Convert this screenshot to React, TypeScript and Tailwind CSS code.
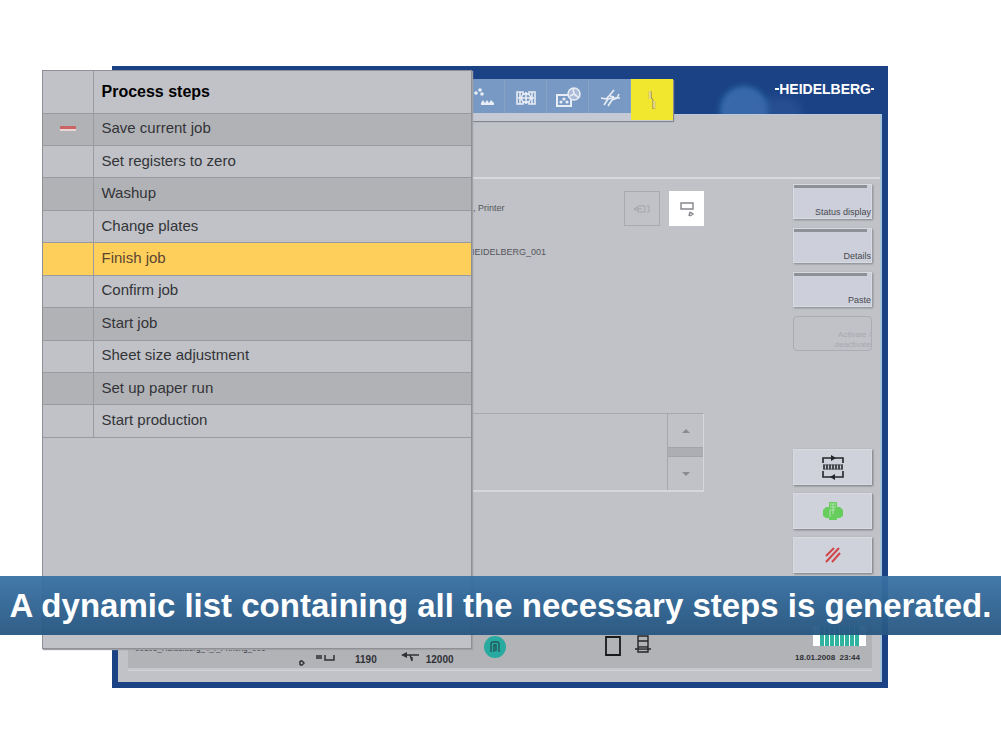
import type { ReactNode } from "react";

const steps = [
  "Save current job",
  "Set registers to zero",
  "Washup",
  "Change plates",
  "Finish job",
  "Confirm job",
  "Start job",
  "Sheet size adjustment",
  "Set up paper run",
  "Start production",
];

function rowColour(index: number) {
  if (steps[index] === "Finish job") return "bg-[#ffcf5c] text-[#5b4632]";
  return index % 2 === 0 ? "bg-[#b1b2b6] text-[#333438]" : "bg-[#c0c2c7] text-[#333438]";
}

function StepsPanel() {
  return (
    <section className="absolute left-[42px] top-[70px] z-10 h-[579px] w-[430px] border border-[#8e9095] bg-[#c0c2c7] shadow-[1px_1px_1px_#a0a1a5]">
      <table className="h-[367px] w-full border-collapse text-left">
        <thead>
          <tr className="h-[42px] border-b border-[#999ba0] text-[16px] text-black">
            <th className="w-[50px] border-r border-[#999ba0]" aria-label="State" />
            <th className="px-2 font-bold">Process steps</th>
          </tr>
        </thead>
        <tbody className="text-[15px]">
          {steps.map((step, i) => (
            <tr key={step} className={`border-b border-[#999ba0] ${rowColour(i)}`}>
              <td className="border-r border-[#999ba0] pb-0.5">
                {i === 0 && <div className="mx-auto h-[5px] w-4 border-b-2 border-[#eed5d5] bg-[#cc6464]" />}
              </td>
              <td className="px-2 pb-0.5 leading-4">{step}</td>
            </tr>
          ))}
        </tbody>
      </table>
    </section>
  );
}

function ToolButton({ label, children }: { label: string; children: ReactNode }) {
  return (
    <button aria-label={label} className="flex h-[34px] w-[42px] items-center justify-center border-r border-[#86a3c6] bg-[#7899c3] pt-1">
      <svg viewBox="0 0 26 22" className="h-[22px] w-[26px]" fill="none" stroke="#e8edf5" strokeWidth="1.6">
        {children}
      </svg>
    </button>
  );
}

function Toolbar() {
  return (
    <div className="ml-auto flex h-[42px] items-start bg-[#c5c9d3] shadow-[1px_1px_1px_#85878c]">
      <ToolButton label="Powder">
        <g fill="#e8edf5" stroke="none">
          <circle cx="5" cy="6" r="1.8" /><circle cx="9" cy="3" r="1.8" /><circle cx="11" cy="7" r="1.8" />
          <path d="M10 18v-2l2-3 2 3 2-3 2 3 2-3 3 3v2z" />
        </g>
      </ToolButton>
      <ToolButton label="Register">
        <path d="M4 5h6v2h6V5h6v12h-6v-2h-6v2H4zM7 5v12M19 5v12M13 5v12M5 11h16" />
        <circle cx="13" cy="11" r="4.5" />
      </ToolButton>
      <ToolButton label="Ink preview">
        <path d="M2 8h14v11H2z" strokeWidth="2" />
        <circle cx="19" cy="7" r="6" fill="#a9bbd6" />
        <path d="M18 1l1 6 4 3M15 9l4-2" />
        <g fill="#e8edf5" stroke="none"><circle cx="6" cy="15" r="1.6" /><circle cx="9" cy="12" r="1.6" /><circle cx="12" cy="15" r="1.6" /></g>
      </ToolButton>
      <ToolButton label="Washup">
        <path d="M4 11l5 1 3-3 5-6M7 18l4-6 4-1h8M11 19l4-6 5-2 2-4M13 9l4 1" />
      </ToolButton>
      <button aria-label="Process" className="flex h-[41px] w-[42px] items-center justify-center bg-[#f0e72e]">
        <svg viewBox="0 0 20 26" className="h-[26px] w-5" fill="none">
          <path d="M8 4v8M12 14v8" stroke="#d0bd55" strokeWidth="3" />
          <path d="M9 4v6l2 3v9" stroke="#918458" />
          <path d="M8 4v8M12 14v7" stroke="#fbf6bc" />
        </svg>
      </button>
    </div>
  );
}

function Brand() {
  return (
    <div className="mt-1 flex h-3 items-center text-[14px] font-bold leading-3 text-white">
      <span className="h-0.5 w-1 bg-white" />
      HEIDELBERG
      <span className="h-0.5 w-[3px] bg-white" />
    </div>
  );
}

function SideButton({ label }: { label: string }) {
  return (
    <button className="flex h-[35px] w-full flex-col justify-between border border-[#d9dbe2] bg-[#cdd0da] text-right text-[9px] leading-3 text-[#484950] shadow-[1px_1px_2px_#85878c]">
      <span className="mr-1 h-[3px] self-stretch bg-[#8e9196]" />
      <span className="self-end">{label}</span>
    </button>
  );
}

function IconButton({ label, children }: { label: string; children: ReactNode }) {
  return (
    <button aria-label={label} className="flex h-9 w-full items-center justify-center border border-[#dadbe2] bg-[#cfd1db] shadow-[1px_1px_2px_#77797e]">
      <svg viewBox="0 0 24 26" className="h-[26px] w-6" fill="none">{children}</svg>
    </button>
  );
}

function JobArea() {
  return (
    <div className="flex-1 pl-[350px] pr-[89px] pt-3 text-[9px] text-[#55565b]">
      <div className="flex h-[35px] items-center gap-[9px]">
        <span className="mr-auto">1, Printer</span>
        <button aria-label="Transfer" className="flex h-[35px] w-9 items-center justify-center border border-[#a8aaaf]">
          <svg viewBox="0 0 18 12" className="h-3 w-[18px]" fill="none" stroke="#a3a5aa">
            <path d="M5 3h7v6H5zM1 6h8M4 4L1 6l3 2M14 3h2v6h-2" />
          </svg>
        </button>
        <button aria-label="Remove plate" className="flex h-[35px] w-[35px] items-center justify-center bg-white">
          <svg viewBox="0 0 16 18" className="h-[18px] w-4" fill="none" stroke="#85868b" strokeWidth="1.4">
            <path d="M2 3h12v6H2zM11 12l3 2-3 2M10 16l1-4" />
          </svg>
        </button>
      </div>
      <p className="mt-5 leading-3">HEIDELBERG_001</p>
      <div className="mt-[155px] flex h-[79px] justify-end border-b-2 border-r border-t border-b-[#d6d7dc] border-r-[#d6d7dc] border-t-[#a5a7ac]">
        <div className="flex w-9 flex-col border-l border-[#a5a7ac]">
          <button aria-label="Scroll up" className="flex flex-1 items-center justify-center">
            <svg viewBox="0 0 8 4" className="h-1 w-2" fill="#898b90"><path d="M0 4L4 0l4 4z" /></svg>
          </button>
          <div className="h-2.5 border-y border-[#a2a4a9] bg-[#acaeb3]" />
          <button aria-label="Scroll down" className="flex flex-1 items-center justify-center">
            <svg viewBox="0 0 8 4" className="h-1 w-2" fill="#898b90"><path d="M0 0l4 4 4-4z" /></svg>
          </button>
        </div>
      </div>
    </div>
  );
}

function SideColumn() {
  return (
    <div className="mr-2 flex w-[79px] shrink-0 flex-col pb-[17px] pt-[5px]">
      <div className="flex flex-col gap-[9px]">
        <SideButton label="Status display" />
        <SideButton label="Details" />
        <SideButton label="Paste" />
        <button disabled className="flex h-[35px] w-full items-end justify-end rounded-sm border border-[#acadb3] text-right text-[8px] leading-[10px] text-[#a8a9af]">
          Activate /<br />deactivate
        </button>
      </div>
      <div className="mt-auto flex flex-col gap-2">
        <IconButton label="Sheet circulation">
          <path d="M2 9V4h20v5M2 17v6h20v-6" stroke="#25262a" strokeWidth="1.6" />
          <path d="M10 1l5 3-5 3zM14 20l-5 3 5 3z" fill="#25262a" />
          <path d="M2 13h20" stroke="#44454b" strokeWidth="5" strokeDasharray="2 1" />
          <path d="M2 11h20M2 15h20" stroke="#55565c" />
        </IconButton>
        <IconButton label="Production">
          <path d="M8 4h8v5h3l3 3v6l-3 2h-3v2H8v-2H5l-3-2v-6l3-3h3z" fill="#67ce5e" />
          <path d="M9 6h6M9 9h6M9 12h5M12 6v10M9 12v7" stroke="#b0e0af" />
        </IconButton>
        <IconButton label="Stop feed">
          <path d="M5 14L13 6M5 20L18 6M11 20L19 11" stroke="#d14549" strokeWidth="2" />
        </IconButton>
      </div>
    </div>
  );
}

function StatusBar() {
  return (
    <footer className="ml-[10px] mr-2 flex h-20 items-end border-b-2 border-[#c5c7cc] bg-[#b2b3b7] pl-[7px] text-[10px] font-bold leading-3 text-[#303136] shadow-[0_1px_0_#d2d3d8]">
      <span className="mb-3.5 w-[140px] overflow-hidden whitespace-nowrap text-[8px] font-normal leading-[10px]">00101_Heidelberg_4_f_Printing_001</span>
      <svg viewBox="0 0 6 6" className="mb-0.5 ml-6 h-1.5 w-1.5" fill="none" stroke="#303136" strokeWidth="1.5"><path d="M1 1v4M1 1h2l2 2-2 2H1" /></svg>
      <svg viewBox="0 0 20 8" className="mb-1.5 ml-2.5 h-2 w-5" fill="none" stroke="#303136" strokeWidth="1.5"><path d="M1 2h6M1 4h6M10 1v5h9V1" /></svg>
      <span className="mb-0.5 ml-5">1190</span>
      <svg viewBox="0 0 18 10" className="mb-1.5 ml-6 h-2.5 w-[18px]" fill="none" stroke="#303136" strokeWidth="1.4"><path d="M4 3h14M9 3l2 6M11 9V5" /><path d="M0 3l6-3v6z" fill="#303136" stroke="none" /></svg>
      <span className="mb-0.5 ml-[7px]">12000</span>
      <svg viewBox="0 0 22 22" className="mb-2.5 ml-[30px] h-[22px] w-[22px]" fill="none">
        <circle cx="11" cy="11" r="11" fill="#29aaa0" />
        <path d="M7 16V8q0-2 2-2h4q2 0 2 2v8M10 16V9h2v6" stroke="#20575c" strokeWidth="1.4" />
      </svg>
      <svg viewBox="0 0 16 20" className="mb-3 ml-[99px] h-5 w-4" fill="none"><path d="M1 1h14v18H1z" stroke="#18191c" strokeWidth="1.8" /></svg>
      <svg viewBox="0 0 18 20" className="mb-3.5 ml-[13px] h-5 w-[18px]" fill="none" stroke="#25262a" strokeWidth="1.4">
        <path d="M4 2h10v11H4zM4 7h10M1 15h16M4 13v5h10v-5" />
        <path d="M5 14h8" stroke="#606166" />
      </svg>
      <div className="mb-1.5 ml-auto mr-3 flex flex-col items-end">
        <div className="-mr-1.5 mb-2 flex h-5 w-[53px] justify-center bg-white">
          <svg viewBox="0 0 39 20" className="h-5 w-[39px]"><path d="M0 10h39" stroke="#31b2a1" strokeWidth="20" strokeDasharray="4 1" /></svg>
        </div>
        <time className="whitespace-nowrap text-[8px] leading-2">18.01.2008&nbsp; 23:44</time>
      </div>
    </footer>
  );
}

function Machine() {
  return (
    <main className="ml-[112px] mr-[113px] bg-[#1b4285] px-1.5 pb-1.5">
      <header className="relative flex h-12 overflow-visible pt-[13px]">
        <div className="absolute inset-0 overflow-hidden">
          <div className="absolute right-[116px] top-[22px] h-11 w-11 rounded-full bg-[#4779ba] opacity-70 shadow-[0_0_5px_1px_#3f98d2] blur-[2px]" />
          <div className="absolute right-20 top-8 h-8 w-12 rounded-full bg-[#3862a5] opacity-40 blur-[4px]" />
        </div>
        <div className="relative flex w-full items-start">
          <Toolbar />
          <div className="ml-[102px] mr-2"><Brand /></div>
        </div>
      </header>
      <div className="border-r-2 border-t border-[#a5c4d6] border-t-[#bcc9d8] bg-[#c0c2c7] pb-3">
        <div className="h-[64px] border-b-2 border-[#d8d9de]" />
        <div className="flex h-[411px]">
          <JobArea />
          <SideColumn />
        </div>
        <StatusBar />
      </div>
    </main>
  );
}

export default function App() {
  return (
    <div className="relative min-h-screen bg-white pt-[66px] font-['Liberation_Sans',Arial,sans-serif]">
      <Machine />
      <StepsPanel />
      <div className="absolute inset-x-0 top-[576px] z-20 flex h-[59px] items-center justify-center bg-linear-to-b from-[#3972a6]/95 to-[#265680]/95">
        <h1 className="whitespace-nowrap text-[33px] font-bold leading-10 text-white">A dynamic list containing all the necessary steps is generated.</h1>
      </div>
    </div>
  );
}
